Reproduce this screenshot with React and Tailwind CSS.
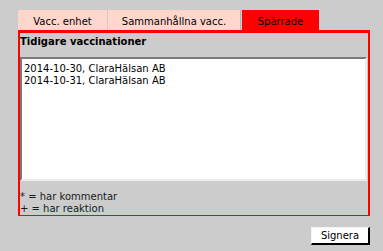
import React from 'react';

const tabs = [
  { label: 'Vacc. enhet', w: 'w-[89px]', active: false },
  { label: 'Sammanhållna vacc.', w: 'w-[133px] border-r border-[#b4b4b4]', active: false },
  { label: 'Spärrade', w: 'w-[77px]', active: true },
];

const rows = ['2014-10-30, ClaraHälsan AB', '2014-10-31, ClaraHälsan AB'];

export default function App() {
  return (
    <div className="w-[383px] h-[251px] bg-[#cccccc] pt-[10px] pl-[18px] pr-[13px] text-[10px] leading-[12px] text-black font-['DejaVu_Sans',Verdana,sans-serif]">
      <div className="flex gap-[1px] h-[20px]">
        {tabs.map(t => (
          <div
            key={t.label}
            className={`${t.w} h-[20px] pt-[6px] text-center ${t.active ? 'bg-[#ff0000]' : 'bg-[#ffd6cc]'}`}
          >
            {t.label}
          </div>
        ))}
      </div>

      <div className="border-[#ff0000] border-t-[3px] border-x-2 border-b h-[186px] flex flex-col">
        <div className="font-bold pt-[3px] pl-0">Tidigare vaccinationer</div>
        <div className="mt-[9px] mr-px h-[126px] bg-white border-2 border-t-[#7a7a7a] border-l-[#7a7a7a] border-b-[#ececec] border-r-[#ececec] pl-[2px] pt-[4px]">
          {rows.map(r => (
            <div key={r}>{r}</div>
          ))}
        </div>
        <div className="mt-[10px] text-[#1a1a1a]">
          <div>* = har kommentar</div>
          <div>+ = har reaktion</div>
        </div>
      </div>

      <div className="flex justify-end mt-[11px]">
        <button className="w-[59px] h-[18px] bg-white border border-t-[#f4f4f4] border-l-[#f4f4f4] border-b-2 border-r-2 border-b-black border-r-black text-center leading-[14px]">
          Signera
        </button>
      </div>
    </div>
  );
}
